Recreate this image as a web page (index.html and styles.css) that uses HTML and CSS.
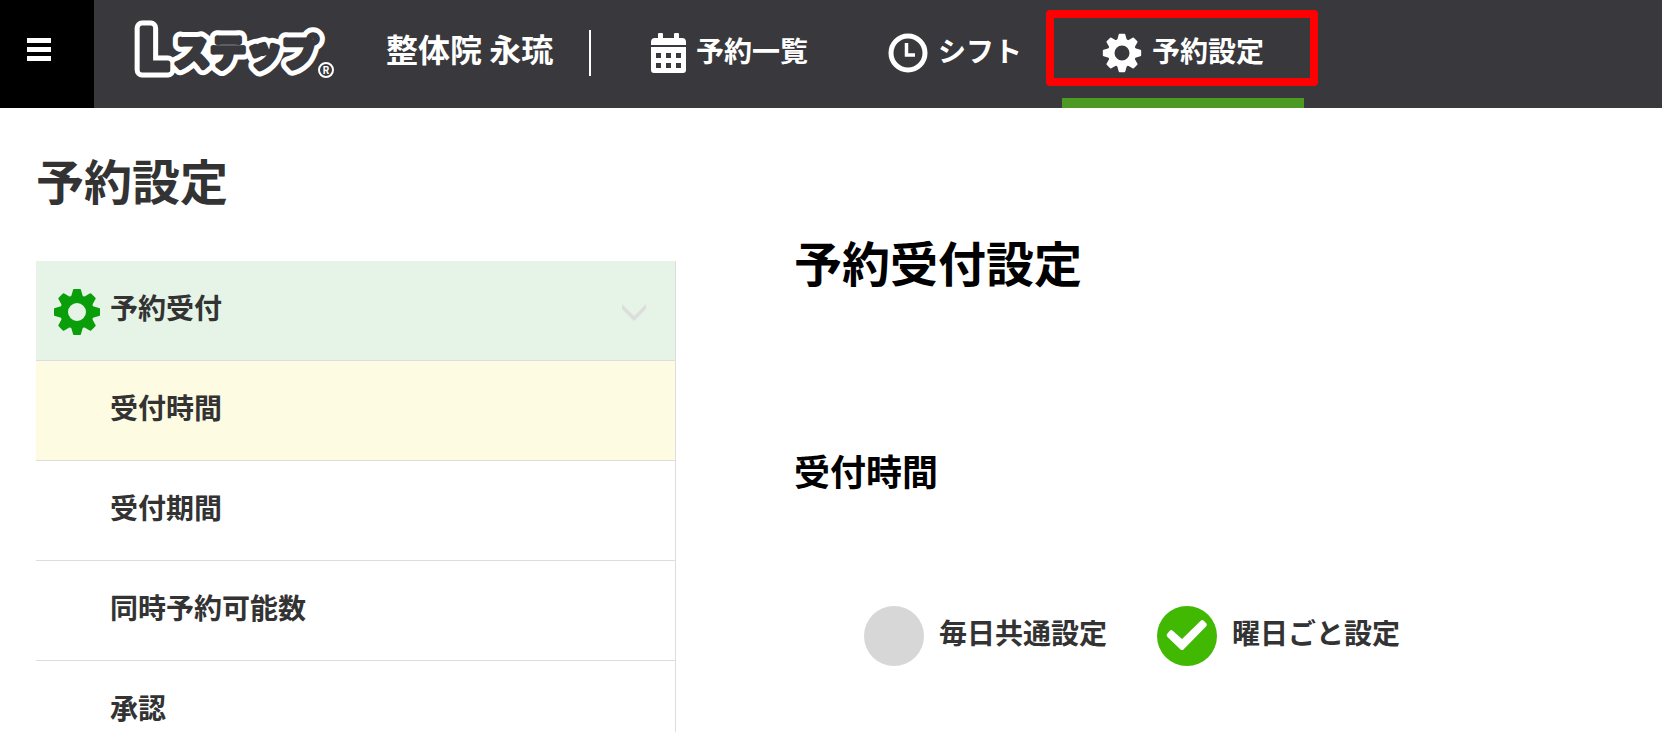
FILE: index.html
```html
<!DOCTYPE html>
<html lang="ja">
<head>
<meta charset="utf-8">
<title>予約設定</title>
<link rel="stylesheet" href="styles.css">
</head>
<body>
<svg class="defs" aria-hidden="true">
  <symbol id="gear" viewBox="-24 -24 48 48">
    <g fill="currentColor">
      <path fill-rule="evenodd" d="M0-17a17 17 0 1 0 0 34a17 17 0 1 0 0-34zM0-9a9 9 0 1 1 0 18a9 9 0 1 1 0-18z"/>
      <g id="teeth">
        <path id="tooth" d="M-6-15L-4-22Q-4-23-3-23H3Q4-23 4-22L6-15z"/>
        <use href="#tooth" transform="rotate(90)"/>
        <use href="#tooth" transform="rotate(180)"/>
        <use href="#tooth" transform="rotate(270)"/>
      </g>
      <use href="#teeth" transform="rotate(45)"/>
    </g>
  </symbol>
</svg>
<header class="topbar">
  <button class="menu" type="button" aria-label="メニュー"><span class="bar"></span><span class="bar"></span><span class="bar"></span></button>
  <a class="logo" href="#">
    <svg class="logo-art" viewBox="0 0 212 93" role="img" aria-label="Lステップ">
      <g class="logo-outer"><text class="logo-l" x="9" y="70">L</text><text class="logo-kana" x="46" y="66">ステップ</text></g>
      <g class="logo-inner"><text class="logo-l" x="9" y="70">L</text><text class="logo-kana" x="46" y="66">ステップ</text></g>
      <circle class="logo-ring" cx="198" cy="70" r="7"/>
      <text class="logo-r" x="198" y="74">R</text>
    </svg>
  </a>
  <p class="shop">整体院 永琉</p>
  <nav class="nav">
    <a class="nav-item" href="#">
      <svg class="nav-icon" viewBox="0 0 40 40" aria-hidden="true"><path fill="currentColor" fill-rule="evenodd" d="M13 0h3q1 0 1 1v4h11V1q0-1 1-1h3q1 0 1 1v4h3q4 0 4 4v3H5V9q0-4 4-4h3V1q0-1 1-1zM5 14h35v23q0 3-3 3H8q-3 0-3-3zM10 20v5h5v-5zM20 20v5h5v-5zM30 20v5h5v-5zM10 30v5h5v-5zM20 30v5h5v-5zM30 30v5h5v-5z"/></svg>
      予約一覧</a>
    <a class="nav-item" href="#">
      <svg class="nav-icon" viewBox="0 0 40 40" aria-hidden="true"><circle cx="20" cy="20" r="17" fill="none" stroke="currentColor" stroke-width="5"/><path d="M18.500 10v12h8.500" fill="none" stroke="currentColor" stroke-width="3.500"/></svg>
      シフト</a>
    <a class="nav-item active" href="#" aria-current="page">
      <svg class="nav-icon" aria-hidden="true"><use href="#gear"/></svg>
      予約設定</a>
  </nav>
</header>
<div class="layout">
  <aside class="side">
    <h1 class="page-title">予約設定</h1>
    <ul class="side-list">
      <li><a class="side-item group" href="#"><svg class="side-gear" aria-hidden="true"><use href="#gear"/></svg><span>予約受付</span><svg class="chevron" viewBox="0 0 26 18" aria-hidden="true"><path d="M1 0L13 12L25 0V5L13 17L1 5z" fill="currentColor"/></svg></a></li>
      <li><a class="side-item selected" href="#">受付時間</a></li>
      <li><a class="side-item" href="#">受付期間</a></li>
      <li><a class="side-item" href="#">同時予約可能数</a></li>
      <li><a class="side-item" href="#">承認</a></li>
    </ul>
  </aside>
  <main class="content">
    <h2 class="heading">予約受付設定</h2>
    <h3 class="subheading">受付時間</h3>
    <div class="choices">
      <label class="choice"><input class="radio" type="radio" name="mode">毎日共通設定</label>
      <label class="choice"><span class="mark"><input class="radio" type="radio" name="mode" checked><svg class="check" viewBox="0 0 60 60" aria-hidden="true"><path d="M10 28L13 24.500Q14.500 23.500 16 25L25 33L44 14.500Q45.500 13.500 47 15L49.500 17.500Q50.500 19 49 20.500L26.500 43.500Q25 44.500 23.500 43.500L10.500 31Q9 29.500 10 28z" fill="#fff"/></svg></span>曜日ごと設定</label>
    </div>
  </main>
</div>
</body>
</html>
```
FILE: styles.css
```css
* { box-sizing: border-box; }
body {
  margin: 0;
  height: 100vh;
  overflow: hidden;
  background: #fff;
  color: #333;
  font-family: "Noto Sans CJK JP", sans-serif;
  font-size: 28px;
  font-weight: 700;
  line-height: 40px;
}
a { color: inherit; text-decoration: none; }
h1, h2, h3, p, ul { margin: 0; padding: 0; }
ul { list-style: none; }
.defs { position: absolute; width: 0; height: 0; }

.topbar {
  display: flex;
  align-items: stretch;
  height: 108px;
  background: #39383d;
  color: #fff;
}
.menu {
  display: flex;
  flex-direction: column;
  gap: 4px;
  width: 94px;
  padding: 38px 0 0 27px;
  border: 0;
  background: #000;
}
.bar { width: 24px; height: 5px; background: #fff; }
.logo { margin-left: 34px; }
.logo-art { display: block; width: 212px; height: 93px; overflow: visible; }
.logo-outer, .logo-inner { stroke-linejoin: round; }
.logo-outer { fill: #fff; stroke: #fff; stroke-width: 15px; }
.logo-inner { fill: #39383d; stroke: #39383d; stroke-width: 5px; }
.logo-l { font-size: 57px; }
.logo-kana { font-size: 36px; }
.logo-ring { fill: #39383d; stroke: #fff; stroke-width: 2px; }
.logo-r { fill: #fff; font-size: 10px; text-anchor: middle; }
.shop {
  align-self: flex-start;
  width: 205px;
  height: 46px;
  margin: 30px 15px 0 46px;
  border-right: 2px solid #fff;
  font-size: 32px;
  line-height: 36px;
  white-space: nowrap;
}
.nav { display: flex; }
.nav-item {
  display: flex;
  gap: 10px;
  padding: 30px 40px 0;
  white-space: nowrap;
}
.nav-icon { width: 40px; height: 40px; margin-top: 3px; }
.active {
  position: relative;
  border-bottom: 10px solid #4c9a23;
}
.active::after {
  content: "";
  position: absolute;
  inset: 10px -14px 12px -16px;
  border: 8px solid #f00;
  border-radius: 4px;
}

.layout { display: flex; padding: 0 36px; }
.side { flex: 0 0 640px; }
.page-title {
  padding: 35px 0 46px;
  font-size: 48px;
  line-height: 72px;
}
.side-list { border-right: 1px solid #ddd; }
.side-item {
  display: flex;
  height: 100px;
  padding: 26px 28px 0 74px;
  border-bottom: 1px solid #ddd;
}
.group { padding-left: 17px; gap: 9px; background: #e5f4e6; }
.side-gear { width: 48px; height: 48px; margin-top: 1px; color: #0a9e0a; }
.chevron { width: 26px; height: 18px; margin: 17px 0 0 auto; color: #ddd; }
.selected { background: #fefbe3; }

.content { flex: 1; padding: 117px 0 0 118px; }
.heading { color: #000; font-size: 48px; line-height: 72px; }
.subheading {
  margin-top: 146px;
  color: #000;
  font-size: 36px;
  line-height: 54px;
}
.choices { display: flex; gap: 50px; padding: 109px 0 0 70px; }
.choice { display: flex; align-items: flex-start; gap: 15px; line-height: 52px; white-space: nowrap; }
.radio {
  appearance: none;
  display: block;
  width: 60px;
  height: 60px;
  margin: 0;
  border-radius: 50%;
  background: #d7d7d7;
}
.radio:checked { background: #41b802; }
.mark { position: relative; }
.check { position: absolute; inset: 0; width: 60px; height: 60px; pointer-events: none; }
```
